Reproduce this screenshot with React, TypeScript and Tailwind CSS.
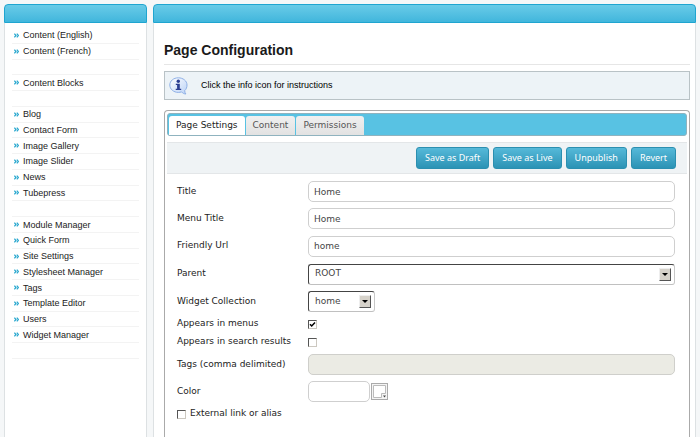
import React, { useState } from "react";

const menu: string[] = [
  "Content (English)", "Content (French)", "", "Content Blocks", "",
  "Blog", "Contact Form", "Image Gallery", "Image Slider", "News", "Tubepress", "",
  "Module Manager", "Quick Form", "Site Settings", "Stylesheet Manager", "Tags",
  "Template Editor", "Users", "Widget Manager", "",
];

const fieldClass =
  "block h-[21px] w-full rounded-[5px] border border-[#cfcfcf] bg-white px-[5px] text-[9px] text-[#444] outline-none";

function PanelHeader() {
  return (
    <div className="h-[19px] rounded-t-[4px] border border-[#1fa5d0] bg-linear-to-b from-[#68cbe8] to-[#40b6dc]" />
  );
}

function Chevrons() {
  return (
    <svg viewBox="0 0 5 5" className="h-[5px] w-[5px] shrink-0" fill="none" stroke="#2ba8cf" strokeWidth="1.2" aria-hidden="true">
      <path d="M0.4 0.7 2 2.5 0.4 4.3M2.8 0.7 4.4 2.5 2.8 4.3" />
    </svg>
  );
}

function InfoIcon() {
  return (
    <svg viewBox="0 0 19 18" className="h-[18px] w-[19px] shrink-0" aria-hidden="true">
      <defs>
        <linearGradient id="bubble" x1="0" y1="0" x2="1" y2="1">
          <stop offset="0" stopColor="#fff" />
          <stop offset="1" stopColor="#bcd3f7" />
        </linearGradient>
      </defs>
      <path
        d="M9.3.8C4.6.8.8 3.9.8 8s3.8 7.4 8.5 7.4c1.2 0 2.3-.2 3.3-.5 1 1.3 2.6 2 4.3 2.1-.8-.9-1.2-2-1.2-3.4C17.3 12.2 18 10.2 18 8c0-4.1-3.9-7.2-8.7-7.2Z"
        fill="url(#bubble)" stroke="#8fb0e6" strokeWidth="1"
      />
      <circle cx="9.3" cy="4.2" r="1.7" fill="#2c3f92" />
      <path d="M6.8 6.7h4v5h1.400v1.300H6.700v-1.300h1.400V8H6.800Z" fill="#2c3f92" />
    </svg>
  );
}

function ToolButton({ children }: { children: string }) {
  return (
    <button
      type="button"
      className="h-[22px] rounded-[3px] border border-[#2b8fb0] bg-linear-to-b from-[#55b9d9] to-[#2b93b5] px-2 font-['Noto_Sans',sans-serif] text-[9px] text-white"
    >
      {children}
    </button>
  );
}

function Row({ id, label, className, children }: { id: string; label: string; className: string; children: React.ReactNode }) {
  return (
    <div className={"flex items-center " + className}>
      <label htmlFor={id} className="w-[131px] shrink-0 whitespace-nowrap">{label}</label>
      <div className="min-w-0 flex-1">{children}</div>
    </div>
  );
}

function Choice({ id, value, className }: { id: string; value: string; className: string }) {
  return (
    <div className={"relative " + className}>
      <select
        id={id}
        defaultValue={value}
        className="block h-[21px] w-full appearance-none rounded-[3px] border border-t-[#444] border-r-[#c8c8c8] border-b-[#c0c0c0] border-l-[#444] bg-white px-[6px] text-[9px] text-[#444] outline-none"
      >
        <option>{value}</option>
      </select>
      <span className="pointer-events-none absolute top-1 right-1 flex h-[13px] w-3 items-center justify-center border border-t-[#eee] border-r-[#555] border-b-[#555] border-l-[#eee] bg-[#d6d2ca]">
        <svg viewBox="0 0 6 3" className="h-[3px] w-[6px]" aria-hidden="true"><path d="M0 0h6L3 3Z" /></svg>
      </span>
    </div>
  );
}

function Tick({ id, checked = false }: { id: string; checked?: boolean }) {
  const [on, setOn] = useState(checked);
  return (
    <span className="relative block h-[9px] w-[9px] shrink-0">
      <input
        id={id}
        type="checkbox"
        checked={on}
        onChange={() => setOn(!on)}
        className="block h-[9px] w-[9px] appearance-none border border-t-[#555] border-r-[#ccc8c0] border-b-[#ccc8c0] border-l-[#555] bg-white"
      />
      {on && (
        <svg viewBox="0 0 9 9" className="pointer-events-none absolute inset-0 h-[9px] w-[9px]" fill="none" stroke="#000" strokeWidth="1.5" aria-hidden="true">
          <path d="M2 4.2 3.7 6 7 2.5" />
        </svg>
      )}
    </span>
  );
}

const tabs = ["Page Settings", "Content", "Permissions"];

export default function App() {
  const [tab, setTab] = useState(0);
  return (
    <div className="flex h-screen gap-[6px] overflow-hidden bg-[#f5f7f8] pt-1 pr-1 pl-1 font-['Liberation_Sans',Arial,sans-serif] text-[9px] text-[#222]">
      <aside className="flex w-[143px] shrink-0 flex-col">
        <PanelHeader />
        <nav className="flex-1 border-x border-[#dde1e3] bg-white px-[7px] pt-[5px]">
          <ul className="grid h-[331px] auto-rows-fr">
            {menu.map((name, i) => (
              <li key={i} className="flex items-center border-b border-[#f3f3f3]">
                {name && (
                  <a href="#" className="flex items-center gap-1 pl-[2px] leading-3">
                    <Chevrons />
                    {name}
                  </a>
                )}
              </li>
            ))}
          </ul>
        </nav>
      </aside>

      <main className="flex min-w-0 flex-1 flex-col">
        <PanelHeader />
        <div className="flex flex-1 flex-col border-x border-[#dde1e3] bg-white pr-[5px] pl-[10px]">
          <h1 className="mt-[17px] h-[25px] border-b border-[#e6e6e6] text-sm leading-5 font-bold text-[#1a1a1a]">
            Page Configuration
          </h1>
          <div className="mt-[6px] flex h-[29px] items-center gap-[13px] border border-[#b9c2c6] bg-[#edf3f7] pl-1 text-black">
            <InfoIcon />
            <p>Click the info icon for instructions</p>
          </div>

          <section className="mt-[10px] flex-1 rounded-t-[4px] border border-b-0 border-[#aaa] px-[2px] pt-[2px] font-['DejaVu_Sans',Verdana,sans-serif]">
            <div role="tablist" className="flex h-[23px] items-end gap-px rounded-[3px] border border-[#8fb3bf] bg-[#58c2e3] pl-px">
              {tabs.map((name, i) => (
                <button
                  key={name}
                  type="button"
                  role="tab"
                  aria-selected={tab === i}
                  onClick={() => setTab(i)}
                  className={
                    "h-[19px] rounded-t-[3px] px-[7px] text-[9px] " +
                    (tab === i ? "bg-white text-[#222]" : "bg-linear-to-b from-[#f0f0f0] to-[#e2e2e2] text-[#555]")
                  }
                >
                  {name}
                </button>
              ))}
            </div>
            <div className="mt-[6px] flex h-8 items-center justify-end gap-1 border-y border-[#e3e6e8] bg-[#eff3f5] pr-[11px]">
              <ToolButton>Save as Draft</ToolButton>
              <ToolButton>Save as Live</ToolButton>
              <ToolButton>Unpublish</ToolButton>
              <ToolButton>Revert</ToolButton>
            </div>
            <form className="mt-1 pr-3 pl-[10px]">
              <Row id="title" label="Title" className="h-[27px]"><input id="title" defaultValue="Home" className={fieldClass} /></Row>
              <Row id="menu" label="Menu Title" className="h-[27px]"><input id="menu" defaultValue="Home" className={fieldClass} /></Row>
              <Row id="url" label="Friendly Url" className="h-7"><input id="url" defaultValue="home" className={fieldClass} /></Row>
              <Row id="parent" label="Parent" className="h-7"><Choice id="parent" value="ROOT" className="w-full" /></Row>
              <Row id="widgets" label="Widget Collection" className="h-[27px]"><Choice id="widgets" value="home" className="w-[67px]" /></Row>
              <Row id="menus" label="Appears in menus" className="h-[18px]"><Tick id="menus" checked /></Row>
              <Row id="search" label="Appears in search results" className="h-[18px]"><Tick id="search" /></Row>
              <Row id="tags" label="Tags (comma delimited)" className="h-[27px]">
                <input id="tags" disabled className="block h-[21px] w-full rounded-[5px] border border-[#cfcfcb] bg-[#ebebe4]" />
              </Row>
              <Row id="color" label="Color" className="h-[27px]">
                <div className="flex items-center gap-px">
                  <input id="color" className="block h-[21px] w-[62px] rounded-[5px] border border-[#cfcfcf] bg-white" />
                  <button type="button" aria-label="Pick a color" className="h-[17px] w-[17px] border border-[#aaa] bg-[#f4f4f4]">
                    <svg viewBox="0 0 15 15" className="h-[15px] w-[15px]" aria-hidden="true">
                      <path d="M1.5 1.5h12v8h-4v4h-8Z" fill="#fff" stroke="#bbb" />
                      <path d="M11 11.5h3l-1.500 2Z" fill="#444" />
                    </svg>
                  </button>
                </div>
              </Row>
              <div className="flex h-[18px] items-center gap-1">
                <Tick id="external" />
                <label htmlFor="external">External link or alias</label>
              </div>
            </form>
          </section>
        </div>
      </main>
    </div>
  );
}
